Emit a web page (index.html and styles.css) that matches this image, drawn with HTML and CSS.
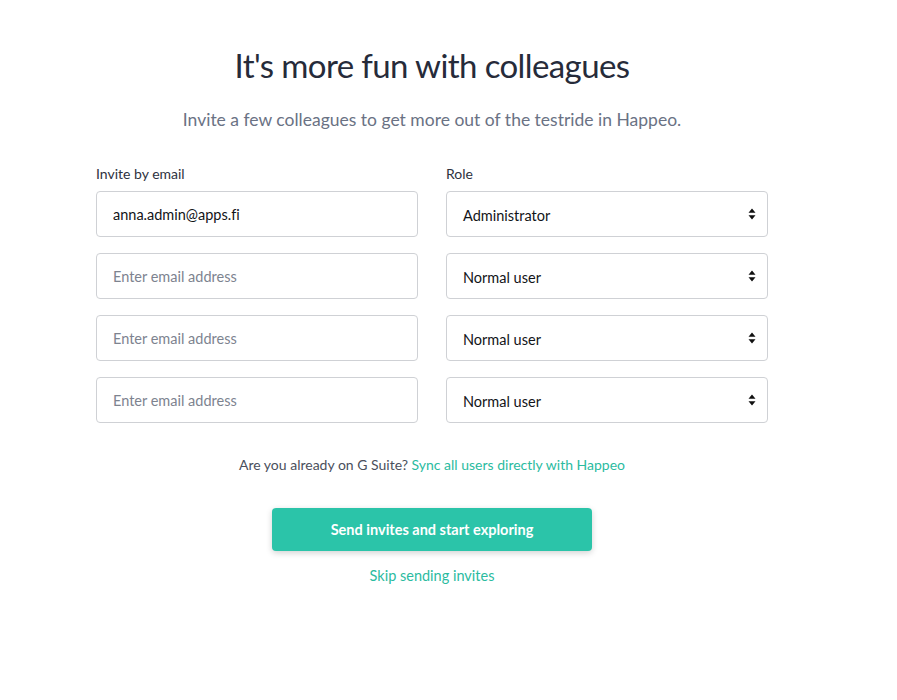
FILE: index.html
```html
<!DOCTYPE html>
<html>
<head>
<meta charset="utf-8">
<link rel="stylesheet" href="styles.css">
</head>
<body>
<main class="page">
  <h1 class="title">It's more fun with colleagues</h1>
  <p class="subtitle">Invite a few colleagues to get more out of the testride in Happeo.</p>
  <div class="form">
    <div class="labels">
      <span class="label">Invite by email</span>
      <span class="label">Role</span>
    </div>
    <div class="row">
      <div class="field"><span class="value">anna.admin@apps.fi</span></div>
      <div class="field select"><span class="value">Administrator</span><span class="arrows"><svg width="8" height="12" viewBox="0 0 8 12"><path d="M4 0.5 L7.5 4.8 H0.5 Z M4 11.5 L7.5 7.2 H0.5 Z" fill="#111"/></svg></span></div>
    </div>
    <div class="row">
      <div class="field"><span class="placeholder">Enter email address</span></div>
      <div class="field select"><span class="value">Normal user</span><span class="arrows"><svg width="8" height="12" viewBox="0 0 8 12"><path d="M4 0.5 L7.5 4.8 H0.5 Z M4 11.5 L7.5 7.2 H0.5 Z" fill="#111"/></svg></span></div>
    </div>
    <div class="row">
      <div class="field"><span class="placeholder">Enter email address</span></div>
      <div class="field select"><span class="value">Normal user</span><span class="arrows"><svg width="8" height="12" viewBox="0 0 8 12"><path d="M4 0.5 L7.5 4.8 H0.5 Z M4 11.5 L7.5 7.2 H0.5 Z" fill="#111"/></svg></span></div>
    </div>
    <div class="row">
      <div class="field"><span class="placeholder">Enter email address</span></div>
      <div class="field select"><span class="value">Normal user</span><span class="arrows"><svg width="8" height="12" viewBox="0 0 8 12"><path d="M4 0.5 L7.5 4.8 H0.5 Z M4 11.5 L7.5 7.2 H0.5 Z" fill="#111"/></svg></span></div>
    </div>
  </div>
  <p class="gsuite">Are you already on G Suite? <a class="link">Sync all users directly with Happeo</a></p>
  <button class="primary">Send invites and start exploring</button>
  <a class="link skip">Skip sending invites</a>
</main>
</body>
</html>
```
FILE: styles.css
```css
* { box-sizing: border-box; }
html, body { margin: 0; padding: 0; background: #fff; }
body { font-family: "Lato", "Noto Sans", sans-serif; color: #2b2f3d; font-variant-ligatures: none; }
.page {
  width: 672px;
  margin-left: 96px;
  display: flex;
  flex-direction: column;
  align-items: center;
  padding-top: 43px;
}
.title {
  margin: 0;
  font-size: 33px;
  font-weight: 400;
  letter-spacing: -0.6px;
  color: #262b3a;
  line-height: 44px;
}
.subtitle {
  margin: 22px 0 0;
  font-size: 17.5px;
  color: #6a7284;
  line-height: 22px;
}
.form { width: 100%; margin-top: 34px; }
.labels { display: grid; grid-template-columns: 1fr 1fr; column-gap: 28px; }
.label { font-size: 14px; color: #2e3240; line-height: 18px; }
.row { display: grid; grid-template-columns: 1fr 1fr; column-gap: 28px; margin-top: 16px; }
.labels + .row { margin-top: 8px; }
.field {
  height: 46px;
  border: 1px solid #cfd1d5;
  border-radius: 4px;
  display: flex;
  align-items: center;
  padding: 0 16px;
  font-size: 14.5px;
}
.value { color: #121418; }
.placeholder { color: #7d838f; }
.select { justify-content: space-between; padding-right: 11px; }
.select .value { padding-top: 3px; }
.arrows { display: flex; }
.gsuite { margin: 33px 0 0; font-size: 14px; color: #4a4f5c; line-height: 18px; }
.link { color: #2bbb9f; text-decoration: none; }
.primary {
  margin-top: 34px;
  width: 320px;
  height: 43px;
  border: none;
  border-radius: 4px;
  background: #2bc4a9;
  color: #fff;
  font-family: inherit;
  font-size: 14.5px;
  font-weight: 700;
  box-shadow: 0 2px 6px rgba(0,0,0,0.18);
}
.skip { margin-top: 16px; font-size: 14.5px; line-height: 18px; }
```
